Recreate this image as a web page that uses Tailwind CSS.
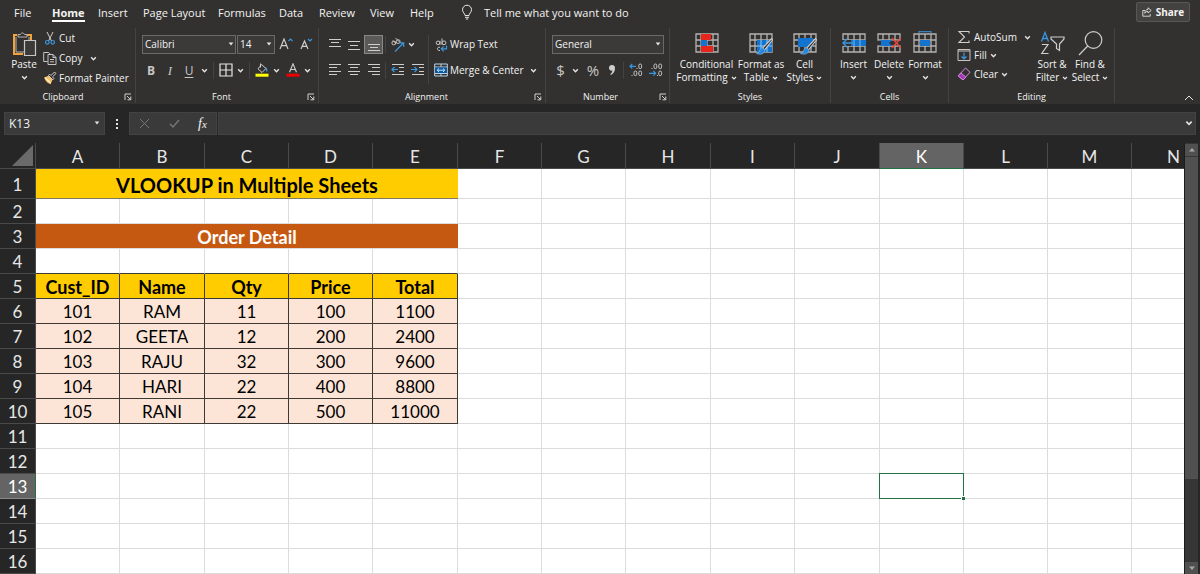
<!DOCTYPE html>
<html lang="en">
<head>
  <meta charset="UTF-8">
  <meta name="viewport" content="width=device-width, initial-scale=1.0">
  <title>VLOOKUP in Multiple Sheets</title>
  <script src="https://cdn.jsdelivr.net/npm/@tailwindcss/browser@4"></script>
</head>
<body class="bg-[#262626] h-screen overflow-hidden flex flex-col text-[11px] leading-[13px] text-[#f3f3f3] font-['Open_Sans','Noto_Sans',sans-serif]">

  <!-- shared symbols -->
  <svg class="hidden">
    <symbol id="chev" viewBox="0 0 6 6"><path d="M1 2l2 2 2-2" fill="none" stroke="#e6e6e6" stroke-width="1.2"/></symbol>
    <symbol id="caret" viewBox="0 0 6 6"><path d="M.7 1.5h4.6L3 4.500z" fill="#e6e6e6"/></symbol>
    <symbol id="launch" viewBox="0 0 8 8"><path d="M1 7V1h6M3 3l3.500 3.500M6.800 3.500v3.300H3.500" fill="none" stroke="#d0d0d0"/></symbol>
    <symbol id="grid" viewBox="0 0 24 24"><path d="M1 3h22v18H1zM1 9h22M1 15h22M6 3v18M12 3v18M18 3v18" fill="none" stroke="#b5b3b1" stroke-width="1.300"/></symbol>
    <symbol id="brush" viewBox="0 0 24 24"><path d="M23.500 9L15.500 19l-2-1.800 9-9.500z" fill="#323130" stroke="#d8d6d4" stroke-width="1.100"/><path d="M14 17c-3-.3-3 2-4 4-.5 1-1.500 1.300-2.500 1.500 3.500 1.600 8 .8 8.500-3.700z" fill="#2b88d8" stroke="#7db9e8" stroke-width=".6"/></symbol>
  </svg>

  <header class="bg-[#323130] shrink-0">
    <!-- tabs -->
    <nav class="flex h-[27px] items-center pl-[14px] pr-[10px] pb-[3px]">
      <button class="w-[38px] text-left">File</button>
      <button class="w-[46px] text-left font-bold"><span class="inline-block border-b-2 border-white pb-[1px] mt-[3px]">Home</span></button>
      <button class="w-[45px] text-left">Insert</button>
      <button class="w-[75px] text-left whitespace-nowrap">Page Layout</button>
      <button class="w-[61px] text-left">Formulas</button>
      <button class="w-[40px] text-left">Data</button>
      <button class="w-[51px] text-left">Review</button>
      <button class="w-[40px] text-left">View</button>
      <button class="w-[51px] text-left">Help</button>
      <button class="flex items-center gap-[11px] whitespace-nowrap">
        <svg class="w-[12px] h-[16px]" viewBox="0 0 12 16" fill="none" stroke="#e8e8e8"><path d="M4 11.500c0-2-2.500-3-2.500-5.800a4.500 4.500 0 0 1 9 0c0 2.800-2.500 3.800-2.500 5.800zM4 13.300h4M4.800 15h2.400"/></svg>
        Tell me what you want to do
      </button>
      <button class="ml-auto flex h-[20px] w-[54px] items-center justify-center gap-[4px] rounded-[2px] border border-[#5a5856] bg-[#444241] text-[10px] font-bold">
        <svg class="size-[10px]" viewBox="0 0 10 10" fill="none" stroke="#e0e0e0" stroke-width=".9"><path d="M3 3.500H.8v5.700h7.400V7M6 .8l3.200 2.700L6 6V4.500C4.500 4.300 3.500 5 2.800 6.300 3 4 4 2.500 6 2.400z"/></svg>
        Share
      </button>
    </nav>

    <!-- ribbon groups -->
    <div class="flex h-[77px] py-px text-[10px]">
      <section class="flex w-[136px] flex-col border-r border-[#454341]">
        <div class="flex flex-1 pl-[10px]">
          <button class="flex w-[28px] flex-col items-center pt-[3px]">
            <svg class="w-[25px] h-[26px]" viewBox="0 0 25 26" fill="none"><path d="M5 4H2v19h9M15 4h4v5" stroke="#f2a33a" stroke-width="2"/><path d="M6 6V3.500h2.500C9 1.500 12 1.500 12.500 3.500H15V6zM4 6v15h8M17 6v3" stroke="#b9b7b5"/><path d="M12.500 9.500H23.500V24.500H12.500z" fill="#3b3a39" stroke="#c9c7c5" stroke-width="1.200"/></svg>
            <span class="mt-[1px]">Paste</span>
            <svg class="size-[7px] mt-[3px]"><use href="#chev"/></svg>
          </button>
          <div class="flex flex-col pl-[5px]">
            <button class="flex h-[20px] items-center gap-[2px]">
              <svg class="size-[14px]" viewBox="0 0 14 14" fill="none"><path d="M4 1l4.500 9M10 1L5.500 10" stroke="#d0cecc"/><circle cx="4.300" cy="11.300" r="1.800" stroke="#3a96dd" stroke-width="1.200"/><circle cx="9.700" cy="11.300" r="1.800" stroke="#3a96dd" stroke-width="1.200"/></svg>
              Cut
            </button>
            <button class="flex h-[20px] items-center gap-[2px]">
              <svg class="size-[14px]" viewBox="0 0 14 14" fill="none" stroke="#c8c6c4"><path d="M4.500 10.500H.7V1.500h5l1.500 1.500M5 3.500h5l3 3v7H5zM10 3.500v3h3M7 8.500h4M7 10.800h4"/></svg>
              Copy
              <svg class="size-[7px] ml-[6px]"><use href="#chev"/></svg>
            </button>
            <button class="flex h-[20px] items-center gap-[2px] whitespace-nowrap">
              <svg class="size-[14px]" viewBox="0 0 14 14"><path d="M1 6.500l4.500-1.800 4 4-2 4.500C4.500 12.500 2.500 10 1 6.500z" fill="#f5c067"/><path d="M3 7.500l3.500 3.500M2 6.800l6 5.500" stroke="#fff" stroke-width=".8"/><path d="M5.500 4.500l4.300 4.300 1.200-1.200-1.500-1.700L13 2.500 11.500 1 8 4.500 6.700 3.200z" fill="#323130" stroke="#dedcda" stroke-width=".9"/></svg>
              Format Painter
            </button>
          </div>
        </div>
        <footer class="flex h-[13px] items-center justify-end text-[9px]"><span class="flex-1 pl-[2px] text-center">Clipboard</span><button class="mr-[3px]" aria-label="Clipboard settings"><svg class="size-[8px]"><use href="#launch"/></svg></button></footer>
      </section>

      <section class="flex w-[183px] flex-col border-r border-[#454341]">
        <div class="flex flex-1 flex-col pl-[6px] pt-[7px]">
          <div class="flex h-[19px] items-center">
            <label class="relative block w-[94px]"><select aria-label="Font" class="h-[19px] w-full appearance-none border border-[#6b6967] bg-[#3b3a39] pl-[2px] text-[10px]"><option>Calibri</option></select><svg class="absolute right-[2px] top-[6px] size-[6px]"><use href="#caret"/></svg></label>
            <label class="relative ml-[1px] block w-[38px]"><select aria-label="Font size" class="h-[19px] w-full appearance-none border border-[#6b6967] bg-[#3b3a39] pl-[2px] text-[10px]"><option>14</option></select><svg class="absolute right-[3px] top-[6px] size-[6px]"><use href="#caret"/></svg></label>
            <button class="ml-[4px]" aria-label="Increase font size"><svg class="w-[14px] h-[15px]" viewBox="0 0 14 15" fill="none"><path d="M1 12L5 2 9 12M2.500 8.600h5" stroke="#d0cecc" stroke-width="1.200"/><path d="M9.500 4l2-2 2 2" stroke="#3a96dd" stroke-width="1.200"/></svg></button>
            <button class="ml-[6px]" aria-label="Decrease font size"><svg class="w-[14px] h-[15px]" viewBox="0 0 14 15" fill="none"><path d="M2 12L5.500 4 9 12M3.300 9.300h4.400" stroke="#d0cecc" stroke-width="1.200"/><path d="M9 2l2 2 2-2" stroke="#3a96dd" stroke-width="1.200"/></svg></button>
          </div>
          <div class="mt-[7px] flex h-[18px] items-center text-[12px] text-[#c8c6c4]">
            <button class="w-[18px] font-bold">B</button>
            <button class="w-[20px] font-['Liberation_Serif',serif] text-[13px] italic">I</button>
            <button class="w-[18px] underline underline-offset-2">U</button>
            <button class="ml-[3px]" aria-label="Underline style"><svg class="size-[7px]"><use href="#chev"/></svg></button>
            <i class="mx-[5px] h-[17px] border-l border-[#454341]"></i>
            <button class="flex items-center gap-[4px]" aria-label="Borders"><svg class="size-[14px]" viewBox="0 0 14 14" fill="none" stroke="#e8e6e4" stroke-width="1.200"><path d="M1 1h12v12H1zM7 1v12M1 7h12"/></svg><svg class="size-[7px]"><use href="#chev"/></svg></button>
            <i class="mx-[5px] h-[17px] border-l border-[#454341]"></i>
            <button class="flex items-center gap-[4px]" aria-label="Fill color"><svg class="size-[14px]" viewBox="0 0 14 14" fill="none"><path d="M6.500 1.500l4.500 4-4 4-4-3.700zM5.500.5v4" stroke="#d0cecc"/><path d="M10.500 4.500c1.300.8 1.500 2 1.300 4" stroke="#3a96dd" stroke-width="1.400"/><path d="M.5 10.700h13v3H.5z" fill="#ff0"/></svg><svg class="size-[7px]"><use href="#chev"/></svg></button>
            <button class="ml-[6px] flex items-center gap-[4px]" aria-label="Font color"><svg class="size-[14px]" viewBox="0 0 14 14" fill="none"><path d="M3.500 9.300L7 .8l3.500 8.500M4.600 6.500h4.800" stroke="#d0cecc" stroke-width="1.100"/><path d="M.5 10.700h13v3H.5z" fill="#f00000"/></svg><svg class="size-[7px]"><use href="#chev"/></svg></button>
          </div>
        </div>
        <footer class="flex h-[13px] items-center text-[9px]"><span class="flex-1 text-center">Font</span><button class="mr-[3px]" aria-label="Font settings"><svg class="size-[8px]"><use href="#launch"/></svg></button></footer>
      </section>

      <section class="flex w-[227px] flex-col border-r border-[#454341]">
        <div class="flex flex-1 pt-[7px]">
          <div class="w-[110px] border-r border-[#454341] mb-[6px] pl-[6px]">
            <div class="flex h-[19px] items-center">
              <button class="flex w-[19px] justify-center" aria-label="Top align"><svg class="size-[14px]" viewBox="0 0 14 14" stroke="#d0cecc"><path d="M1 1.500h12M3 4.500h8M1 8.500h12"/></svg></button>
              <button class="flex w-[20px] justify-center" aria-label="Middle align"><svg class="size-[14px]" viewBox="0 0 14 14" stroke="#d0cecc"><path d="M1 3.500h12M3 7.500h8M1 11.500h12"/></svg></button>
              <button class="flex size-[19px] items-center justify-center border border-[#8a8886] bg-[#5c5a58]" aria-label="Bottom align"><svg class="size-[14px]" viewBox="0 0 14 14" stroke="#d0cecc"><path d="M1 6.500h12M3 9.500h8M1 12.500h12"/></svg></button>
              <i class="mx-[2px] h-[17px] border-l border-[#454341]"></i>
              <button class="ml-[2px] flex items-center gap-[2px]" aria-label="Orientation"><svg class="size-[16px]" viewBox="0 0 16 16" fill="none"><g stroke="#c8c6c4"><circle cx="3.800" cy="6" r="1.900"/><path d="M2.800 3.500l3.500 3.500M5.500 1l4.500 4.500"/><circle cx="8.200" cy="4.600" r="1.900"/></g><path d="M5 14.500l8.500-8.500M9.500 5.800h4.200V10" stroke="#3a96dd" stroke-width="1.200"/></svg><svg class="size-[7px]"><use href="#chev"/></svg></button>
            </div>
            <div class="mt-[7px] flex h-[18px] items-center">
              <button class="flex w-[19px] justify-center" aria-label="Align left"><svg class="size-[14px]" viewBox="0 0 14 14" stroke="#d0cecc"><path d="M1 1.500h12M1 4.500h8M1 8.500h12M1 11.500h8"/></svg></button>
              <button class="flex w-[20px] justify-center" aria-label="Center"><svg class="size-[14px]" viewBox="0 0 14 14" stroke="#d0cecc"><path d="M1 1.500h12M3 4.500h8M1 8.500h12M3 11.500h8"/></svg></button>
              <button class="flex w-[19px] justify-center" aria-label="Align right"><svg class="size-[14px]" viewBox="0 0 14 14" stroke="#d0cecc"><path d="M1 1.500h12M5 4.500h8M1 8.500h12M5 11.500h8"/></svg></button>
              <i class="mx-[2px] h-[17px] border-l border-[#454341]"></i>
              <button class="flex w-[20px] justify-center" aria-label="Decrease indent"><svg class="size-[14px]" viewBox="0 0 14 14" fill="none" stroke="#d0cecc"><path d="M1 1.500h12M8 4.500h5M8 8.500h5M1 11.500h12"/><path d="M7 6.500H1M3.500 4L1 6.500 3.500 9" stroke="#3a96dd" stroke-width="1.200"/></svg></button>
              <button class="flex w-[20px] justify-center" aria-label="Increase indent"><svg class="size-[14px]" viewBox="0 0 14 14" fill="none" stroke="#d0cecc"><path d="M1 1.500h12M8 4.500h5M8 8.500h5M1 11.500h12"/><path d="M0 6.500h6M3.500 4L6 6.500 3.500 9" stroke="#3a96dd" stroke-width="1.200"/></svg></button>
            </div>
          </div>
          <div class="pl-[5px]">
            <button class="flex h-[19px] items-center gap-[2px] whitespace-nowrap">
              <svg class="size-[14px]" viewBox="0 0 14 14" fill="none" stroke="#c8c6c4"><circle cx="4" cy="4.800" r="1.800"/><path d="M6 2.800v4M8 .5v6.300M6 9.300c-3-1-4 3.500 0 3.200"/><circle cx="10" cy="4.800" r="1.900"/><path d="M12.500 7.500v3.300H7.500M9.800 8.300l-2.500 2.500 2.500 2.500" stroke="#3a96dd" stroke-width="1.200"/></svg>
              Wrap Text
            </button>
            <button class="mt-[7px] flex h-[18px] items-center gap-[2px] whitespace-nowrap">
              <svg class="size-[14px]" viewBox="0 0 14 14" fill="none"><path d="M.7 1h12.600v12H.7zM.7 4h12.600M.7 10.500h12.600M7 1v3M7 10.500V13" stroke="#b9d4ea"/><path d="M1.200 4.500h11.600v5.500H1.200z" fill="#0e5a9c"/><path d="M3 7.200h8M5 5.500L3.200 7.200 5 9M9 5.500l1.800 1.700L9 9" stroke="#b9e0ff"/></svg>
              Merge &amp; Center
              <svg class="size-[7px] ml-[4px]"><use href="#chev"/></svg>
            </button>
          </div>
        </div>
        <footer class="flex h-[13px] items-center text-[9px]"><span class="flex-1 text-center">Alignment</span><button class="mr-[3px]" aria-label="Alignment settings"><svg class="size-[8px]"><use href="#launch"/></svg></button></footer>
      </section>

      <section class="flex w-[124px] flex-col border-r border-[#454341]">
        <div class="flex flex-1 flex-col pl-[6px] pt-[7px]">
          <label class="relative block w-[112px]"><select aria-label="Number format" class="h-[19px] w-full appearance-none border border-[#6b6967] bg-[#3b3a39] pl-[2px] text-[10px]"><option>General</option></select><svg class="absolute right-[3px] top-[6px] size-[6px]"><use href="#caret"/></svg></label>
          <div class="mt-[7px] flex h-[18px] items-center text-[15px] text-[#c8c6c4]">
            <button class="w-[17px]">$</button>
            <button class="ml-[3px]" aria-label="Currency"><svg class="size-[7px]"><use href="#chev"/></svg></button>
            <button class="ml-[6px] w-[16px]">%</button>
            <button class="ml-[4px] flex w-[14px] justify-center" aria-label="Comma style"><svg class="w-[8px] h-[12px]" viewBox="0 0 8 12"><path d="M4 1a2.800 2.800 0 0 1 3 3c0 3.500-1.500 5.700-4 7l-.8-.8C3.800 9 4.300 8 4.300 6.600 2.500 6.900 1 5.700 1 4a2.800 2.800 0 0 1 3-3z" fill="#d0cecc"/></svg></button>
            <i class="ml-[4px] mr-[5px] h-[17px] border-l border-[#454341]"></i>
            <button class="mr-[6px]" aria-label="Increase decimal"><svg class="size-[14px]" viewBox="0 0 14 14" fill="none" stroke="#c8c6c4"><rect x="9.800" y="1" width="2.800" height="4.600" rx="1.400"/><rect x="5" y="8" width="2.800" height="4.600" rx="1.400"/><rect x="9.800" y="8" width="2.800" height="4.600" rx="1.400"/><path d="M2.500 12.500h1M7.500 5.500h1"/><path d="M7 3.300H1M3.300 1L1 3.300l2.300 2.300" stroke="#3a96dd" stroke-width="1.200"/></svg></button>
            <button aria-label="Decrease decimal"><svg class="size-[14px]" viewBox="0 0 14 14" fill="none" stroke="#c8c6c4"><rect x="5" y="1" width="2.800" height="4.600" rx="1.400"/><rect x="9.800" y="1" width="2.800" height="4.600" rx="1.400"/><rect x="9.800" y="8" width="2.800" height="4.600" rx="1.400"/><path d="M2.500 5.500h1M8 12.500h1"/><path d="M0 10.300h6.500M4.300 8l2.300 2.300-2.300 2.300" stroke="#3a96dd" stroke-width="1.200"/></svg></button>
          </div>
        </div>
        <footer class="flex h-[13px] items-center text-[9px]"><span class="flex-1 pr-[4px] text-center">Number</span><button class="mr-[2px]" aria-label="Number settings"><svg class="size-[8px]"><use href="#launch"/></svg></button></footer>
      </section>

      <section class="flex w-[161px] flex-col border-r border-[#454341]">
        <div class="flex flex-1 justify-center pt-[3px] text-center whitespace-nowrap">
          <button class="flex w-[60px] flex-col items-center">
            <svg class="size-[24px]" viewBox="0 0 24 24"><use href="#grid"/><path d="M6 3h10v6H6zM6 15h12v6H6z" fill="#e8251b"/><path d="M6 9h6v6H6z" fill="#1374cf"/></svg>
            <span class="mt-[3px]">Conditional</span><span class="flex items-center gap-[3px]">Formatting <svg class="size-[6px]"><use href="#chev"/></svg></span>
          </button>
          <button class="flex w-[49px] flex-col items-center">
            <svg class="size-[24px]" viewBox="0 0 24 24"><use href="#grid"/><path d="M8 9h15v12H8z" fill="#1374cf"/><path d="M8 15h15M12 9v12M18 9v12" stroke="#9cc8ee"/><use href="#brush"/></svg>
            <span class="mt-[3px]">Format as</span><span class="flex items-center gap-[3px]">Table <svg class="size-[6px]"><use href="#chev"/></svg></span>
          </button>
          <button class="flex w-[38px] flex-col items-center">
            <svg class="size-[24px]" viewBox="0 0 24 24"><use href="#grid"/><path d="M5 7h15v9H5z" fill="#1374cf"/><use href="#brush"/></svg>
            <span class="mt-[3px]">Cell</span><span class="flex items-center gap-[3px]">Styles <svg class="size-[6px]"><use href="#chev"/></svg></span>
          </button>
        </div>
        <footer class="h-[13px] text-center text-[9px]">Styles</footer>
      </section>

      <section class="flex w-[118px] flex-col border-r border-[#454341]">
        <div class="flex flex-1 justify-center pt-[3px]">
          <button class="flex w-[35px] flex-col items-center">
            <svg class="size-[24px]" viewBox="0 0 24 24" fill="none"><use href="#grid"/><path d="M7 9h17v6H7z" fill="#1374cf"/><path d="M12 9v6M18 9v6" stroke="#7db9e8"/><path d="M0 9h9v6H0z" fill="#323130"/><path d="M11 12H1M5.500 7.500L1 12l4.500 4.500" stroke="#3a96dd" stroke-width="1.400"/></svg>
            <span class="mt-[3px]">Insert</span><svg class="size-[7px] mt-[3px]"><use href="#chev"/></svg>
          </button>
          <button class="flex w-[36px] flex-col items-center">
            <svg class="size-[24px]" viewBox="0 0 24 24" fill="none"><use href="#grid"/><path d="M0 9.700h24v4.600H0z" fill="#323130"/><path d="M4 9h11l-3 3 3 3H4z" fill="#1374cf"/><path d="M15 7l9 10M24 7l-9 10" stroke="#f04438" stroke-width="1.400"/></svg>
            <span class="mt-[3px]">Delete</span><svg class="size-[7px] mt-[3px]"><use href="#chev"/></svg>
          </button>
          <button class="flex w-[36px] flex-col items-center">
            <svg class="size-[24px]" viewBox="0 0 24 24" fill="none"><use href="#grid"/><path d="M7 9h10v6H7z" fill="#1374cf"/><path d="M6 .7h12M6 0v2M18 0v2" stroke="#3a96dd"/></svg>
            <span class="mt-[3px]">Format</span><svg class="size-[7px] mt-[3px]"><use href="#chev"/></svg>
          </button>
        </div>
        <footer class="h-[13px] text-center text-[9px]">Cells</footer>
      </section>

      <section class="flex w-[166px] flex-col border-r border-[#454341]">
        <div class="flex flex-1 pl-[8px]">
          <div class="w-[76px]">
            <button class="flex h-[18px] items-center gap-[3px]">
              <svg class="size-[14px]" viewBox="0 0 14 14" fill="none" stroke="#d0cecc" stroke-width="1.100"><path d="M12 3.500V1.500H2L7.500 7 2 12.500h10v-2"/></svg>
              AutoSum
              <svg class="size-[7px] ml-[4px]"><use href="#chev"/></svg>
            </button>
            <button class="flex h-[18px] items-center gap-[3px]">
              <svg class="size-[14px]" viewBox="0 0 14 14" fill="none"><path d="M1 1.500h12v11H1z" stroke="#c8c6c4"/><path d="M1 3h12" stroke="#c8c6c4"/><path d="M7 4.500v6.300M4.500 8.500L7 11l2.500-2.500" stroke="#3a96dd" stroke-width="1.200"/></svg>
              Fill <svg class="size-[7px]"><use href="#chev"/></svg>
            </button>
            <button class="flex h-[20px] items-center gap-[3px]">
              <svg class="size-[14px]" viewBox="0 0 14 14" fill="none" stroke="#d58ae0"><path d="M8.500 1L13 5.200 6 13 1.200 8.800z"/><path d="M3.800 6l5 4L6 13 1.200 8.800z" fill="#a336b5"/></svg>
              Clear <svg class="size-[7px]"><use href="#chev"/></svg>
            </button>
          </div>
          <div class="flex pt-[3px] whitespace-nowrap">
            <button class="flex w-[38px] flex-col items-center">
              <svg class="size-[25px]" viewBox="0 0 25 25" fill="none"><path d="M1.500 10.500L5 1.500l3.500 9M2.800 7.500h4.400" stroke="#3a96dd" stroke-width="1.300"/><path d="M1.800 13.500H8L1.800 22.500H8.500" stroke="#d0cecc" stroke-width="1.200"/><path d="M11 6h13v2l-4.500 5v6.500l-3-2V13L11 8z" stroke="#d0cecc" stroke-width="1.200"/></svg>
              <span class="mt-[2px]">Sort &amp;</span><span class="flex items-center gap-[3px]">Filter <svg class="size-[6px]"><use href="#chev"/></svg></span>
            </button>
            <button class="flex w-[38px] flex-col items-center">
              <svg class="size-[25px]" viewBox="0 0 25 25" fill="none" stroke="#d0cecc" stroke-width="1.200"><circle cx="15.500" cy="9" r="8.300"/><path d="M9.700 15L1 24"/></svg>
              <span class="mt-[2px]">Find &amp;</span><span class="flex items-center gap-[3px]">Select <svg class="size-[6px]"><use href="#chev"/></svg></span>
            </button>
          </div>
        </div>
        <footer class="h-[13px] text-center text-[9px]">Editing</footer>
      </section>

      <button class="ml-auto mr-[6px] self-end" aria-label="Collapse the ribbon"><svg class="size-[10px]" viewBox="0 0 10 10" fill="none" stroke="#e6e6e6"><path d="M1 7l4-4 4 4"/></svg></button>
    </div>
  </header>

  <!-- formula bar -->
  <div class="flex h-[39px] shrink-0 items-center px-[4px]">
    <label class="relative block w-[101px]"><input aria-label="Name box" value="K13" class="h-[23px] w-full border border-[#434343] bg-[#3a3a3a] pl-[4px] text-[12px]"><svg class="absolute right-[5px] top-[8px] size-[6px]"><use href="#caret"/></svg></label>
    <svg class="mx-[10px] w-[4px] h-[10px]" viewBox="0 0 4 10" fill="#e6e6e6"><path d="M1 0h2v2H1zM1 4h2v2H1zM1 8h2v2H1z"/></svg>
    <div class="flex h-[23px] w-[88px] items-center justify-around border border-[#434343] bg-[#3a3a3a]">
      <button aria-label="Cancel"><svg class="size-[11px]" viewBox="0 0 11 11" stroke="#767676"><path d="M1 1l9 9M10 1l-9 9"/></svg></button>
      <button aria-label="Enter"><svg class="size-[11px]" viewBox="0 0 11 11" fill="none" stroke="#767676" stroke-width="1.500"><path d="M1 6l3 3 6-7"/></svg></button>
      <button class="font-['Liberation_Serif',serif] text-[14px] italic" aria-label="Insert function">f<span class="text-[11px]">x</span></button>
    </div>
    <label class="relative ml-[1px] block flex-1"><input aria-label="Formula" class="h-[23px] w-full border border-[#434343] bg-[#3a3a3a] px-2 text-[12px]"><svg class="absolute right-[3px] top-[7px] size-[8px]"><use href="#chev"/></svg></label>
  </div>

  <!-- sheet -->
  <main class="flex min-h-0 flex-1">
    <div class="min-w-0 flex-1 overflow-hidden bg-white">
      <table class="w-[1216px] table-fixed border-separate border-spacing-0 text-center font-['Lato',sans-serif] text-[17px] leading-[20px] text-black">
        <colgroup>
          <col class="w-[36px]"><col class="w-[84px]"><col class="w-[85px]"><col class="w-[84px]"><col class="w-[84px]"><col class="w-[85px]"><col class="w-[84px]"><col class="w-[84px]"><col class="w-[85px]"><col class="w-[84px]"><col class="w-[85px]"><col class="w-[84px]"><col class="w-[84px]"><col class="w-[84px]"><col class="w-[84px]">
        </colgroup>
        <thead><tr id="letters" class="h-[26px]"></tr></thead>
        <tbody id="rows"></tbody>
      </table>
    </div>
    <div class="mr-[2px] flex w-[14px] flex-col border-l border-[#1c1c1c] bg-[#363636]">
      <button class="mt-[1px] flex h-[12px] items-center justify-center bg-[#505050]" aria-label="Scroll up"><svg class="w-[6px] h-[4px]" viewBox="0 0 6 4"><path d="M3 0l3 3.500H0z" fill="#a8a8a8"/></svg></button>
      <div class="mt-[1px] h-[322px] bg-[#505050]"></div>
      <button class="mt-auto flex h-[12px] items-center justify-center bg-[#505050]" aria-label="Scroll down"><svg class="w-[6px] h-[4px]" viewBox="0 0 6 4"><path d="M3 4l3-3.500H0z" fill="#a8a8a8"/></svg></button>
    </div>
  </main>

  <script>
    const columns = 'ABCDEFGHIJKLMN'.split('');
    const data = {
      6: ['101', 'RAM', '11', '100', '1100'],
      7: ['102', 'GEETA', '12', '200', '2400'],
      8: ['103', 'RAJU', '32', '300', '9600'],
      9: ['104', 'HARI', '22', '400', '8800'],
      10: ['105', 'RANI', '22', '500', '11000'],
    };
    const header = ['Cust_ID', 'Name', 'Qty', 'Price', 'Total'];

    const plain = 'border-r border-b border-[#dcdcdc]';
    const boxed = 'border-r border-b border-[#3d3a36]';

    document.getElementById('letters').innerHTML =
      '<th class="bg-[#262626] border-r border-b border-[#4a4a4a] p-0"><svg class="ml-[12px] size-[21px]" viewBox="0 0 21 21"><path d="M21 0v21H0z" fill="#6a6a6a"/></svg></th>' +
      columns.map(c => c === 'K'
        ? '<th class="bg-[#646464] border-r border-b border-r-[#4a4a4a] border-b-[#217346] p-0 pt-[2px] font-normal text-white">K</th>'
        : `<th class="bg-[#262626] border-r border-b border-[#4a4a4a] p-0 pt-[2px] font-normal text-[#e6e6e6]">${c}</th>`).join('');

    let html = '';
    for (let r = 1; r <= 16; r++) {
      html += r === 1 ? '<tr class="h-[30px]">' : '<tr class="h-[25px]">';
      html += r === 13
        ? '<th class="bg-[#646464] border-r border-b border-r-[#217346] border-b-[#8a8a8a] p-0 pt-[2px] font-normal text-white">13</th>'
        : `<th class="bg-[#262626] border-r border-b border-[#4a4a4a] p-0 pt-[2px] font-normal text-[#e6e6e6]">${r}</th>`;

      if (r === 1) {
        html += '<td colspan="5" class="bg-[#ffcc00] border-b border-[#7f7a60] p-0 pt-[2px] text-[20px] font-bold">VLOOKUP in Multiple Sheets</td>';
      } else if (r === 3) {
        html += '<td colspan="5" class="bg-[#c65911] border-b border-[#dcdcdc] p-0 pt-[2px] text-[18px] font-bold text-white">Order Detail</td>';
      }

      columns.forEach((c, i) => {
        if (i < 5 && (r === 1 || r === 3)) return;
        if (i < 5 && r === 4) {
          html += '<td class="border-r border-b border-r-[#dcdcdc] border-b-[#3d3a36] p-0"></td>';
        } else if (i < 5 && r === 5) {
          html += `<td class="${boxed} bg-[#ffcc00] p-0 pt-[2px] text-[18px] font-bold">${header[i]}</td>`;
        } else if (i < 5 && data[r]) {
          html += `<td class="${boxed} bg-[#fce4d6] p-0 pt-[2px]">${data[r][i]}</td>`;
        } else if (c === 'K' && r === 13) {
          html += `<td class="${plain} relative p-0"><div class="absolute -inset-x-px -top-px -bottom-px border border-[#217346]"><i class="absolute -right-[2px] -bottom-[2px] size-[4px] border-t border-l border-white bg-[#217346]"></i></div></td>`;
        } else {
          html += `<td class="${plain} p-0"></td>`;
        }
      });
      html += '</tr>';
    }
    document.getElementById('rows').innerHTML = html;
  </script>
</body>
</html>
